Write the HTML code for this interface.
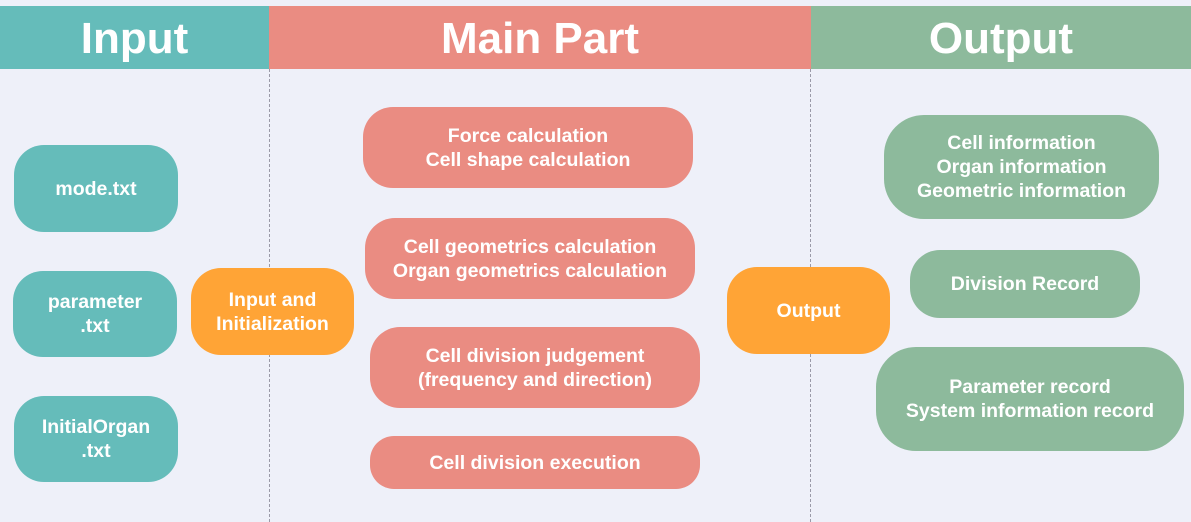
<!DOCTYPE html>
<html><head><style>
body{margin:0;width:1191px;height:522px;background:#eef0f9;position:relative;overflow:hidden;font-family:"Liberation Sans",Arial,sans-serif;font-weight:bold;color:#fff}
.h{position:absolute;top:6px;height:63px;display:flex;align-items:center;justify-content:center;font-size:44px;padding-top:2px;box-sizing:border-box}
.b{position:absolute;display:flex;align-items:center;justify-content:center;text-align:center;font-size:19.5px;line-height:24px;border-radius:30px;white-space:nowrap}
.t{background:#65bcba}.r{background:#ea8c82}.g{background:#8dba9c}.o{background:#ffa436}
.d{position:absolute;top:69px;bottom:0;border-left:1px dashed #9a9aa8}
</style></head><body>
<div class="h t" style="left:0;width:269px">Input</div>
<div class="h r" style="left:269px;width:542px">Main Part</div>
<div class="h g" style="left:811px;width:380px">Output</div>
<div class="d" style="left:269px"></div>
<div class="d" style="left:810px"></div>
<div class="b t" style="left:14px;top:145px;width:164px;height:87px">mode.txt</div>
<div class="b t" style="left:13px;top:271px;width:164px;height:86px">parameter<br>.txt</div>
<div class="b t" style="left:14px;top:396px;width:164px;height:86px">InitialOrgan<br>.txt</div>
<div class="b o" style="left:191px;top:268px;width:163px;height:87px">Input and<br>Initialization</div>
<div class="b r" style="left:363px;top:107px;width:330px;height:81px">Force calculation<br>Cell shape calculation</div>
<div class="b r" style="left:365px;top:218px;width:330px;height:81px">Cell geometrics calculation<br>Organ geometrics calculation</div>
<div class="b r" style="left:370px;top:327px;width:330px;height:81px">Cell division judgement<br>(frequency and direction)</div>
<div class="b r" style="left:370px;top:436px;width:330px;height:53px;border-radius:24px">Cell division execution</div>
<div class="b o" style="left:727px;top:267px;width:163px;height:87px">Output</div>
<div class="b g" style="left:884px;top:115px;width:275px;height:104px;border-radius:40px">Cell information<br>Organ information<br>Geometric information</div>
<div class="b g" style="left:910px;top:250px;width:230px;height:68px">Division Record</div>
<div class="b g" style="left:876px;top:347px;width:308px;height:104px;border-radius:40px">Parameter record<br>System information record</div>
</body></html>
